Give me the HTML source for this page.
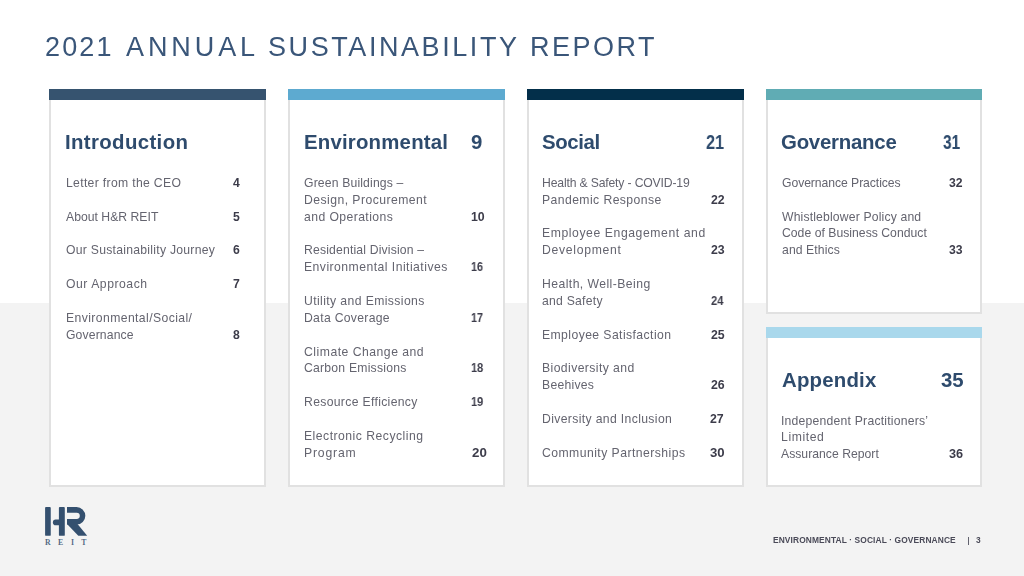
<!DOCTYPE html>
<html><head><meta charset="utf-8"><title>2021 Annual Sustainability Report</title><style>
html,body{margin:0;padding:0}
body{width:1024px;height:576px;position:relative;overflow:hidden;background:#fff;font-family:"Liberation Sans",sans-serif}
.bg{position:absolute;left:0;top:303px;width:1024px;height:273px;background:#f3f3f3}
.card{position:absolute;box-sizing:border-box;background:#fff;border:2px solid #e1e1e1;border-top:0}
.bar{position:absolute}
.t,.n,.h,.title,.foot,.pipe{position:absolute;white-space:nowrap;transform-origin:0 0;will-change:transform}
.t{font-size:12.2px;line-height:13.627px;color:#64646f}
.n{font-size:12.2px;line-height:13.627px;color:#3c3c4a;font-weight:bold}
.h{font-size:20.4px;line-height:22.787px;color:#2e4b6d;font-weight:bold}
.title{font-size:27px;line-height:30.159px;color:#3a5679}
.foot{font-size:8.4px;line-height:9.383px;color:#4a4a58;font-weight:bold}
.pipe{font-size:10px;line-height:11.170px;color:#4a4a58}
.logo{position:absolute}
</style></head><body>
<div class="bg"></div>
<div class="card" style="left:49px;top:89px;width:217px;height:398px"></div><div class="bar" style="left:49px;top:89px;width:217px;height:11px;background:#36536f"></div><div class="card" style="left:288px;top:89px;width:216.5px;height:398px"></div><div class="bar" style="left:288px;top:89px;width:216.5px;height:11px;background:#5daad0"></div><div class="card" style="left:527px;top:89px;width:216.5px;height:398px"></div><div class="bar" style="left:527px;top:89px;width:216.5px;height:11px;background:#032f4a"></div><div class="card" style="left:766px;top:89px;width:216px;height:225px"></div><div class="bar" style="left:766px;top:89px;width:216px;height:11px;background:#60acb4"></div><div class="card" style="left:766px;top:327px;width:216px;height:160px"></div><div class="bar" style="left:766px;top:327px;width:216px;height:10.7px;background:#a9d8ec"></div>
<div class="t" style="left:65.71px;top:176.86px;letter-spacing:0.323px">Letter from the CEO</div>
<div class="t" style="left:65.71px;top:210.61px;letter-spacing:0.016px">About H&amp;R REIT</div>
<div class="t" style="left:65.71px;top:244.36px;letter-spacing:0.264px">Our Sustainability Journey</div>
<div class="t" style="left:65.71px;top:278.11px;letter-spacing:0.532px">Our Approach</div>
<div class="t" style="left:65.71px;top:311.86px;letter-spacing:0.404px">Environmental/Social/</div>
<div class="t" style="left:65.71px;top:328.73px;letter-spacing:0.129px">Governance</div>
<div class="n" style="left:232.80px;top:176.86px;letter-spacing:0.300px">4</div>
<div class="n" style="left:232.80px;top:210.61px;letter-spacing:0.300px">5</div>
<div class="n" style="left:232.80px;top:244.36px;letter-spacing:0.300px">6</div>
<div class="n" style="left:232.80px;top:278.11px;letter-spacing:0.300px">7</div>
<div class="n" style="left:232.80px;top:328.73px;letter-spacing:0.300px">8</div>
<div class="t" style="left:303.58px;top:176.86px;letter-spacing:0.153px">Green Buildings –</div>
<div class="t" style="left:303.58px;top:193.73px;letter-spacing:0.457px">Design, Procurement</div>
<div class="t" style="left:303.58px;top:210.61px;letter-spacing:0.418px">and Operations</div>
<div class="t" style="left:303.58px;top:244.36px;letter-spacing:0.170px">Residential Division –</div>
<div class="t" style="left:303.58px;top:261.23px;letter-spacing:0.466px">Environmental Initiatives</div>
<div class="t" style="left:303.58px;top:294.98px;letter-spacing:0.395px">Utility and Emissions</div>
<div class="t" style="left:303.58px;top:311.86px;letter-spacing:0.304px">Data Coverage</div>
<div class="t" style="left:303.58px;top:345.61px;letter-spacing:0.502px">Climate Change and</div>
<div class="t" style="left:303.58px;top:362.48px;letter-spacing:0.223px">Carbon Emissions</div>
<div class="t" style="left:303.58px;top:396.23px;letter-spacing:0.327px">Resource Efficiency</div>
<div class="t" style="left:303.58px;top:429.98px;letter-spacing:0.489px">Electronic Recycling</div>
<div class="t" style="left:303.58px;top:446.86px;letter-spacing:0.828px">Program</div>
<div class="n" style="left:470.93px;top:210.61px;letter-spacing:0.000px;transform:scaleX(1.0108)">10</div>
<div class="n" style="left:471.23px;top:261.23px;letter-spacing:0.000px;transform:scaleX(0.8830)">16</div>
<div class="n" style="left:471.23px;top:311.86px;letter-spacing:0.000px;transform:scaleX(0.8830)">17</div>
<div class="n" style="left:471.23px;top:362.48px;letter-spacing:0.000px;transform:scaleX(0.8999)">18</div>
<div class="n" style="left:471.23px;top:396.23px;letter-spacing:0.000px;transform:scaleX(0.8999)">19</div>
<div class="n" style="left:471.93px;top:446.86px;letter-spacing:0.000px;transform:scaleX(1.0914)">20</div>
<div class="t" style="left:542.23px;top:176.86px;letter-spacing:-0.160px">Health &amp; Safety - COVID-19</div>
<div class="t" style="left:542.23px;top:193.73px;letter-spacing:0.425px">Pandemic Response</div>
<div class="t" style="left:542.23px;top:227.48px;letter-spacing:0.581px">Employee Engagement and</div>
<div class="t" style="left:542.23px;top:244.36px;letter-spacing:0.705px">Development</div>
<div class="t" style="left:542.23px;top:278.11px;letter-spacing:0.440px">Health, Well-Being</div>
<div class="t" style="left:542.23px;top:294.98px;letter-spacing:0.249px">and Safety</div>
<div class="t" style="left:542.23px;top:328.73px;letter-spacing:0.420px">Employee Satisfaction</div>
<div class="t" style="left:542.23px;top:362.48px;letter-spacing:0.409px">Biodiversity and</div>
<div class="t" style="left:542.23px;top:379.36px;letter-spacing:0.250px">Beehives</div>
<div class="t" style="left:542.23px;top:413.11px;letter-spacing:0.358px">Diversity and Inclusion</div>
<div class="t" style="left:542.23px;top:446.86px;letter-spacing:0.455px">Community Partnerships</div>
<div class="n" style="left:710.71px;top:193.73px;letter-spacing:0.000px;transform:scaleX(1.0108)">22</div>
<div class="n" style="left:710.71px;top:244.36px;letter-spacing:0.000px;transform:scaleX(1.0108)">23</div>
<div class="n" style="left:711.01px;top:294.98px;letter-spacing:0.000px;transform:scaleX(0.9223)">24</div>
<div class="n" style="left:710.71px;top:328.73px;letter-spacing:0.000px;transform:scaleX(1.0108)">25</div>
<div class="n" style="left:710.71px;top:379.36px;letter-spacing:0.000px;transform:scaleX(1.0108)">26</div>
<div class="n" style="left:710.41px;top:413.11px;letter-spacing:0.000px;transform:scaleX(1.0108)">27</div>
<div class="n" style="left:710.41px;top:446.86px;letter-spacing:0.000px;transform:scaleX(1.0797)">30</div>
<div class="t" style="left:781.68px;top:176.86px;letter-spacing:-0.065px">Governance Practices</div>
<div class="t" style="left:781.68px;top:210.61px;letter-spacing:0.158px">Whistleblower Policy and</div>
<div class="t" style="left:781.68px;top:227.48px;letter-spacing:0.022px">Code of Business Conduct</div>
<div class="t" style="left:781.68px;top:244.36px;letter-spacing:0.098px">and Ethics</div>
<div class="n" style="left:948.68px;top:176.86px;letter-spacing:0.000px;transform:scaleX(0.9974)">32</div>
<div class="n" style="left:948.68px;top:244.36px;letter-spacing:0.000px;transform:scaleX(0.9974)">33</div>
<div class="t" style="left:781.34px;top:414.56px;letter-spacing:0.217px">Independent Practitioners’</div>
<div class="t" style="left:781.34px;top:431.16px;letter-spacing:0.600px">Limited</div>
<div class="t" style="left:781.34px;top:447.76px;letter-spacing:0.019px">Assurance Report</div>
<div class="n" style="left:949.24px;top:447.76px;letter-spacing:0.000px;transform:scaleX(1.0390)">36</div>
<div class="h" style="left:65.10px;top:131.24px;letter-spacing:0.364px">Introduction</div>
<div class="h" style="left:304.22px;top:131.24px;letter-spacing:0.195px">Environmental</div>
<div class="h" style="left:471.48px;top:131.24px;letter-spacing:0.900px">9</div>
<div class="h" style="left:542.22px;top:131.24px;letter-spacing:-0.360px">Social</div>
<div class="h" style="left:705.94px;top:131.24px;letter-spacing:0.000px;transform:scaleX(0.7998)">21</div>
<div class="h" style="left:780.78px;top:131.24px;letter-spacing:-0.230px">Governance</div>
<div class="h" style="left:942.70px;top:131.24px;letter-spacing:0.000px;transform:scaleX(0.7575)">31</div>
<div class="h" style="left:782.04px;top:369.04px;letter-spacing:0.200px">Appendix</div>
<div class="h" style="left:940.70px;top:369.04px;letter-spacing:-0.150px">35</div>
<div class="title" style="left:45.21px;top:31.86px;letter-spacing:2.129px">2021</div>
<div class="title" style="left:126.26px;top:31.86px;letter-spacing:3.911px">ANNUAL</div>
<div class="title" style="left:267.58px;top:31.86px;letter-spacing:2.573px">SUSTAINABILITY</div>
<div class="title" style="left:529.74px;top:31.86px;letter-spacing:2.483px">REPORT</div>
<div class="foot" style="left:773.16px;top:535.80px;letter-spacing:0.118px">ENVIRONMENTAL · SOCIAL · GOVERNANCE</div>
<div class="foot" style="left:976.04px;top:535.80px;letter-spacing:0.200px">3</div>
<svg class="logo" width="60" height="50" viewBox="40 500 60 50" style="left:40px;top:500px">
<g fill="#34506f">
<rect x="45.1" y="507.1" width="5.65" height="28.7" rx="0.9"/>
<path d="M55.7,519.6 H59.5 V525.2 H55.7 A2.8,2.8 0 0 1 55.7,519.6 Z"/>
<rect x="58.9" y="507.1" width="5.9" height="28.7" rx="0.9"/>
<path d="M67,507.1 H76.6 A8.75,8.75 0 0 1 76.6,524.6 H67 V519 H76.65 A3.15,3.15 0 0 0 76.65,512.7 H67 Z"/>
<path d="M67,524.0 H77.5 L87.2,535.8 H78.3 Z"/>
</g>
<g fill="#34506f" font-family="Liberation Serif" font-weight="bold" font-size="7.8" fill-opacity="0.85">
<text x="45.0" y="544.9">R</text><text x="58.0" y="544.9">E</text><text x="70.9" y="544.9">I</text><text x="81.3" y="544.9">T</text>
</g>
</svg>
<div style="position:absolute;left:968px;top:536.5px;width:1px;height:8px;background:#62626e"></div>
</body></html>
